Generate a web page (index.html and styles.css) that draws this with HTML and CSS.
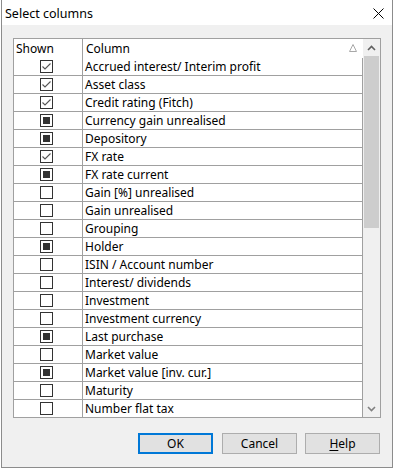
FILE: index.html
```html
<!DOCTYPE html>
<html>
<head>
<meta charset="utf-8">
<link rel="stylesheet" href="styles.css">
</head>
<body>
<div class="dialog">
  <div class="titlebar">
    <span class="title">Select columns</span>
    <svg class="close" width="11" height="11" viewBox="0 0 11 11"><path d="M0.5 0.5 L10.5 10.5 M10.5 0.5 L0.5 10.5" stroke="#000" stroke-width="1" fill="none"/></svg>
  </div>
  <div class="content">
    <div class="grid">
      <div class="list">
        <div class="header">
          <div class="h-shown">Shown</div>
          <div class="h-col">Column
            <svg class="sort" width="8" height="8" viewBox="0 0 8 8"><path d="M4 0.5 L7.5 7.5 L0.5 7.5 Z" stroke="#a8a8a8" stroke-width="1" fill="none"/></svg>
          </div>
        </div>
        <div class="rows">
          <div class="row"><div class="c-shown"><span class="cb on"><svg width="11" height="11" viewBox="0 0 11 11"><path d="M1.5 5.5 L4 8 L9.5 2.5" stroke="#555" stroke-width="1.1" fill="none"/></svg></span></div><div class="c-name">Accrued interest/ Interim profit</div></div>
          <div class="row"><div class="c-shown"><span class="cb on"><svg width="11" height="11" viewBox="0 0 11 11"><path d="M1.5 5.5 L4 8 L9.5 2.5" stroke="#555" stroke-width="1.1" fill="none"/></svg></span></div><div class="c-name">Asset class</div></div>
          <div class="row"><div class="c-shown"><span class="cb on"><svg width="11" height="11" viewBox="0 0 11 11"><path d="M1.5 5.5 L4 8 L9.5 2.5" stroke="#555" stroke-width="1.1" fill="none"/></svg></span></div><div class="c-name">Credit rating (Fitch)</div></div>
          <div class="row"><div class="c-shown"><span class="cb mixed"></span></div><div class="c-name">Currency gain unrealised</div></div>
          <div class="row"><div class="c-shown"><span class="cb mixed"></span></div><div class="c-name">Depository</div></div>
          <div class="row"><div class="c-shown"><span class="cb on"><svg width="11" height="11" viewBox="0 0 11 11"><path d="M1.5 5.5 L4 8 L9.5 2.5" stroke="#555" stroke-width="1.1" fill="none"/></svg></span></div><div class="c-name">FX rate</div></div>
          <div class="row"><div class="c-shown"><span class="cb mixed"></span></div><div class="c-name">FX rate current</div></div>
          <div class="row"><div class="c-shown"><span class="cb"></span></div><div class="c-name">Gain [%] unrealised</div></div>
          <div class="row"><div class="c-shown"><span class="cb"></span></div><div class="c-name">Gain unrealised</div></div>
          <div class="row"><div class="c-shown"><span class="cb"></span></div><div class="c-name">Grouping</div></div>
          <div class="row"><div class="c-shown"><span class="cb mixed"></span></div><div class="c-name">Holder</div></div>
          <div class="row"><div class="c-shown"><span class="cb"></span></div><div class="c-name">ISIN / Account number</div></div>
          <div class="row"><div class="c-shown"><span class="cb"></span></div><div class="c-name">Interest/ dividends</div></div>
          <div class="row"><div class="c-shown"><span class="cb"></span></div><div class="c-name">Investment</div></div>
          <div class="row"><div class="c-shown"><span class="cb"></span></div><div class="c-name">Investment currency</div></div>
          <div class="row"><div class="c-shown"><span class="cb mixed"></span></div><div class="c-name">Last purchase</div></div>
          <div class="row"><div class="c-shown"><span class="cb"></span></div><div class="c-name">Market value</div></div>
          <div class="row"><div class="c-shown"><span class="cb mixed"></span></div><div class="c-name">Market value [inv. cur.]</div></div>
          <div class="row"><div class="c-shown"><span class="cb"></span></div><div class="c-name">Maturity</div></div>
          <div class="row"><div class="c-shown"><span class="cb"></span></div><div class="c-name">Number flat tax</div></div>
        </div>
      </div>
      <div class="scrollbar">
        <div class="sb-btn"><svg width="9" height="6" viewBox="0 0 9 6"><path d="M1 5 L4.5 1.5 L8 5" stroke="#606060" stroke-width="1.6" fill="none"/></svg></div>
        <div class="sb-track"><div class="sb-thumb"></div></div>
        <div class="sb-btn"><svg width="9" height="6" viewBox="0 0 9 6"><path d="M1 1 L4.5 4.5 L8 1" stroke="#808080" stroke-width="1.6" fill="none"/></svg></div>
      </div>
    </div>
    <div class="buttons">
      <button class="btn default">OK</button>
      <button class="btn cancel">Cancel</button>
      <button class="btn help"><u>H</u>elp</button>
    </div>
  </div>
</div>
</body>
</html>
```

FILE: styles.css
```css
* { box-sizing: border-box; }
html, body { margin: 0; padding: 0; background: #ffffff; }
body {
  font-family: "Noto Sans", "Liberation Sans", sans-serif;
  font-size: 12px;
  color: #000;
}
.dialog {
  margin-left: 1px;
  width: 392px;
  height: 468px;
  border: 1px solid #8c8c8c;
  border-top: none;
  background: #f0f0f0;
  display: flex;
  flex-direction: column;
}
.titlebar {
  height: 25px;
  background: #ffffff;
  display: flex;
  align-items: center;
  justify-content: space-between;
  padding: 2px 8px 0 3px;
}
.title { font-size: 12.5px; line-height: 16px; }
.close { display: block; margin-top: -1px; }
.content {
  flex: 1;
  padding: 13px 11px 0 11px;
  display: flex;
  flex-direction: column;
}
.grid {
  width: 368px;
  height: 380px;
  border: 1px solid #a0a0a0;
  background: #ffffff;
  display: flex;
}
.list {
  width: 349px;
  display: flex;
  flex-direction: column;
  overflow: hidden;
}
.header {
  height: 19px;
  flex: none;
  display: flex;
}
.h-shown {
  width: 69px;
  border-right: 1px solid #a0a0a0;
  padding-left: 2px;
  line-height: 20px;
}
.h-col {
  flex: 1;
  padding-left: 3px;
  line-height: 20px;
  display: flex;
  align-items: center;
  justify-content: space-between;
  padding-right: 6px;
}
.sort { display: block; margin-top: -2px; }
.rows { flex: 1; overflow: hidden; }
.row {
  height: 18px;
  display: flex;
  border-bottom: 1px solid #a0a0a0;
  border-right: 1px solid #a0a0a0;
}
.c-shown {
  width: 69px;
  border-right: 1px solid #a0a0a0;
  display: flex;
  align-items: center;
  padding-left: 26px;
}
.c-name {
  flex: 1;
  padding-left: 2px;
  line-height: 18px;
  white-space: nowrap;
}
.cb {
  width: 13px;
  height: 13px;
  border: 1px solid #333333;
  background: #fff;
  display: flex;
  align-items: center;
  justify-content: center;
}
.cb svg { display: block; }
.cb.mixed::after {
  content: "";
  width: 7px;
  height: 7px;
  background: #333333;
}
.scrollbar {
  width: 17px;
  background: #f0f0f0;
  display: flex;
  flex-direction: column;
}
.sb-btn {
  height: 17px;
  flex: none;
  display: flex;
  align-items: center;
  justify-content: center;
}
.sb-track { flex: 1; padding: 0 1px; }
.sb-thumb {
  height: 172px;
  background: #cdcdcd;
}
.buttons {
  display: flex;
  justify-content: flex-end;
  margin-top: 15px;
  padding-right: 1px;
}
.btn {
  width: 75px;
  height: 21px;
  font-family: "Noto Sans", "Liberation Sans", sans-serif;
  font-size: 12px;
  color: #000;
  background: #e1e1e1;
  border: 1px solid #adadad;
  padding: 0;
  margin: 0;
  line-height: 17px;
}
.btn.default { border: 2px solid #0078d7; }
.btn.cancel { margin-left: 9px; }
.btn.help { margin-left: 8px; }
.btn u { text-decoration-thickness: 1px; text-underline-offset: 2px; }
```
